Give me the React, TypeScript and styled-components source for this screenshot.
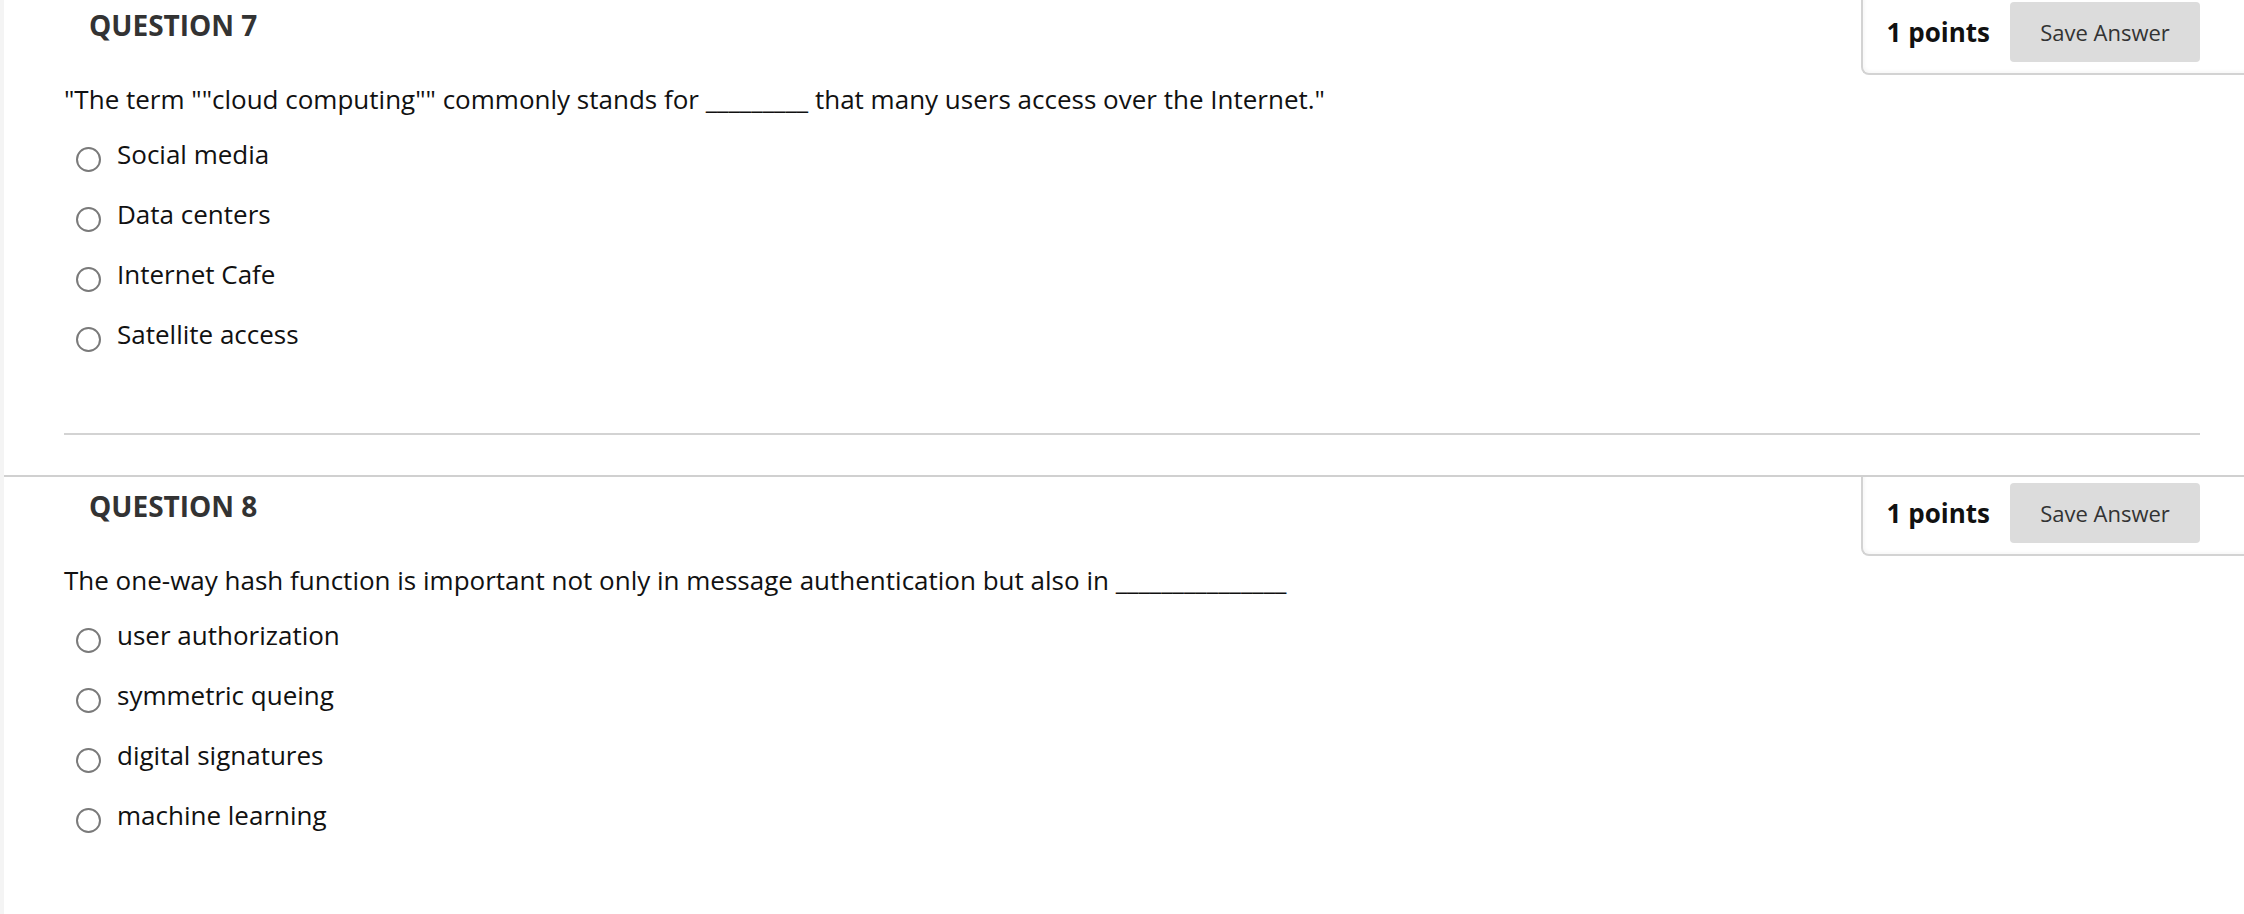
import React from "react";
import styled, { createGlobalStyle } from "styled-components";

const GlobalStyle = createGlobalStyle`
  html, body {
    margin: 0;
    padding: 0;
    background: #ffffff;
    overflow: hidden;
  }
  body {
    font-family: "Open Sans", "Liberation Sans", sans-serif;
  }
`;

const Page = styled.div`
  margin-top: -6px;
  border-left: 4px solid #f4f4f4;
  background: #ffffff;
  min-height: 960px;
`;

const Question = styled.section`
  border-top: 2px solid #d0d0d0;
  padding-bottom: 40px;
`;

const Header = styled.div`
  display: flex;
  justify-content: space-between;
  align-items: flex-start;
`;

const Title = styled.h2`
  margin: 10px 0 0 85px;
  font-family: "Open Sans", "Liberation Sans", sans-serif;
  font-weight: 700;
  font-size: 28px;
  line-height: 38px;
  color: #333333;
`;

const PointsBox = styled.div`
  display: flex;
  align-items: center;
  gap: 20px;
  padding: 6px 44px 11px 24px;
  border-left: 2px solid #d3d3d3;
  border-bottom: 2px solid #d3d3d3;
  border-bottom-left-radius: 8px;
  box-shadow: inset 2px -2px 3px rgba(0, 0, 0, 0.03);
  background: #ffffff;
`;

const Points = styled.span`
  font-family: "Open Sans", "Liberation Sans", sans-serif;
  font-weight: 700;
  font-size: 26px;
  line-height: 36px;
  color: #111111;
`;

const SaveButton = styled.button`
  width: 190px;
  height: 60px;
  border: none;
  border-radius: 4px;
  background: #dcdcdc;
  color: #333333;
  font-family: "Open Sans", "Liberation Sans", sans-serif;
  font-size: 22px;
  padding: 0;
  cursor: pointer;
`;

const Prompt = styled.p`
  margin: 6px 0 0 60px;
  font-family: "Open Sans", "Liberation Sans", sans-serif;
  font-size: 26px;
  line-height: 36px;
  color: #111111;
`;

const OptionList = styled.div`
  margin: 7px 0 0 72px;
  display: flex;
  flex-direction: column;
`;

const Option = styled.label`
  display: flex;
  align-items: flex-start;
  gap: 16px;
  padding: 12px 0;
  font-family: "Open Sans", "Liberation Sans", sans-serif;
  font-size: 26px;
  line-height: 36px;
  color: #111111;
`;

const Radio = styled.input.attrs({ type: "radio" })`
  appearance: none;
  -webkit-appearance: none;
  margin: 11px 0 0 0;
  width: 25px;
  height: 25px;
  flex: none;
  border: 2px solid #7a7a7a;
  border-radius: 50%;
  background: #ffffff;
`;

const Divider = styled.hr`
  margin: 69px 44px 0 60px;
  height: 2px;
  border: none;
  background: #d3d3d3;
`;

type Q = { n: number; text: string; options: string[] };

const questions: Q[] = [
  {
    n: 7,
    text: '"The term ""cloud computing"" commonly stands for _________ that many users access over the Internet."',
    options: ["Social media", "Data centers", "Internet Cafe", "Satellite access"],
  },
  {
    n: 8,
    text: "The one-way hash function is important not only in message authentication but also in _______________",
    options: ["user authorization", "symmetric queing", "digital signatures", "machine learning"],
  },
];

export default function App() {
  return (
    <>
      <GlobalStyle />
      <Page>
        {questions.map((q) => (
          <Question key={q.n}>
            <Header>
              <Title>QUESTION {q.n}</Title>
              <PointsBox>
                <Points>1 points</Points>
                <SaveButton>Save Answer</SaveButton>
              </PointsBox>
            </Header>
            <Prompt>{q.text}</Prompt>
            <OptionList>
              {q.options.map((o) => (
                <Option key={o}>
                  <Radio name={`q${q.n}`} />
                  {o}
                </Option>
              ))}
            </OptionList>
            <Divider />
          </Question>
        ))}
      </Page>
    </>
  );
}
